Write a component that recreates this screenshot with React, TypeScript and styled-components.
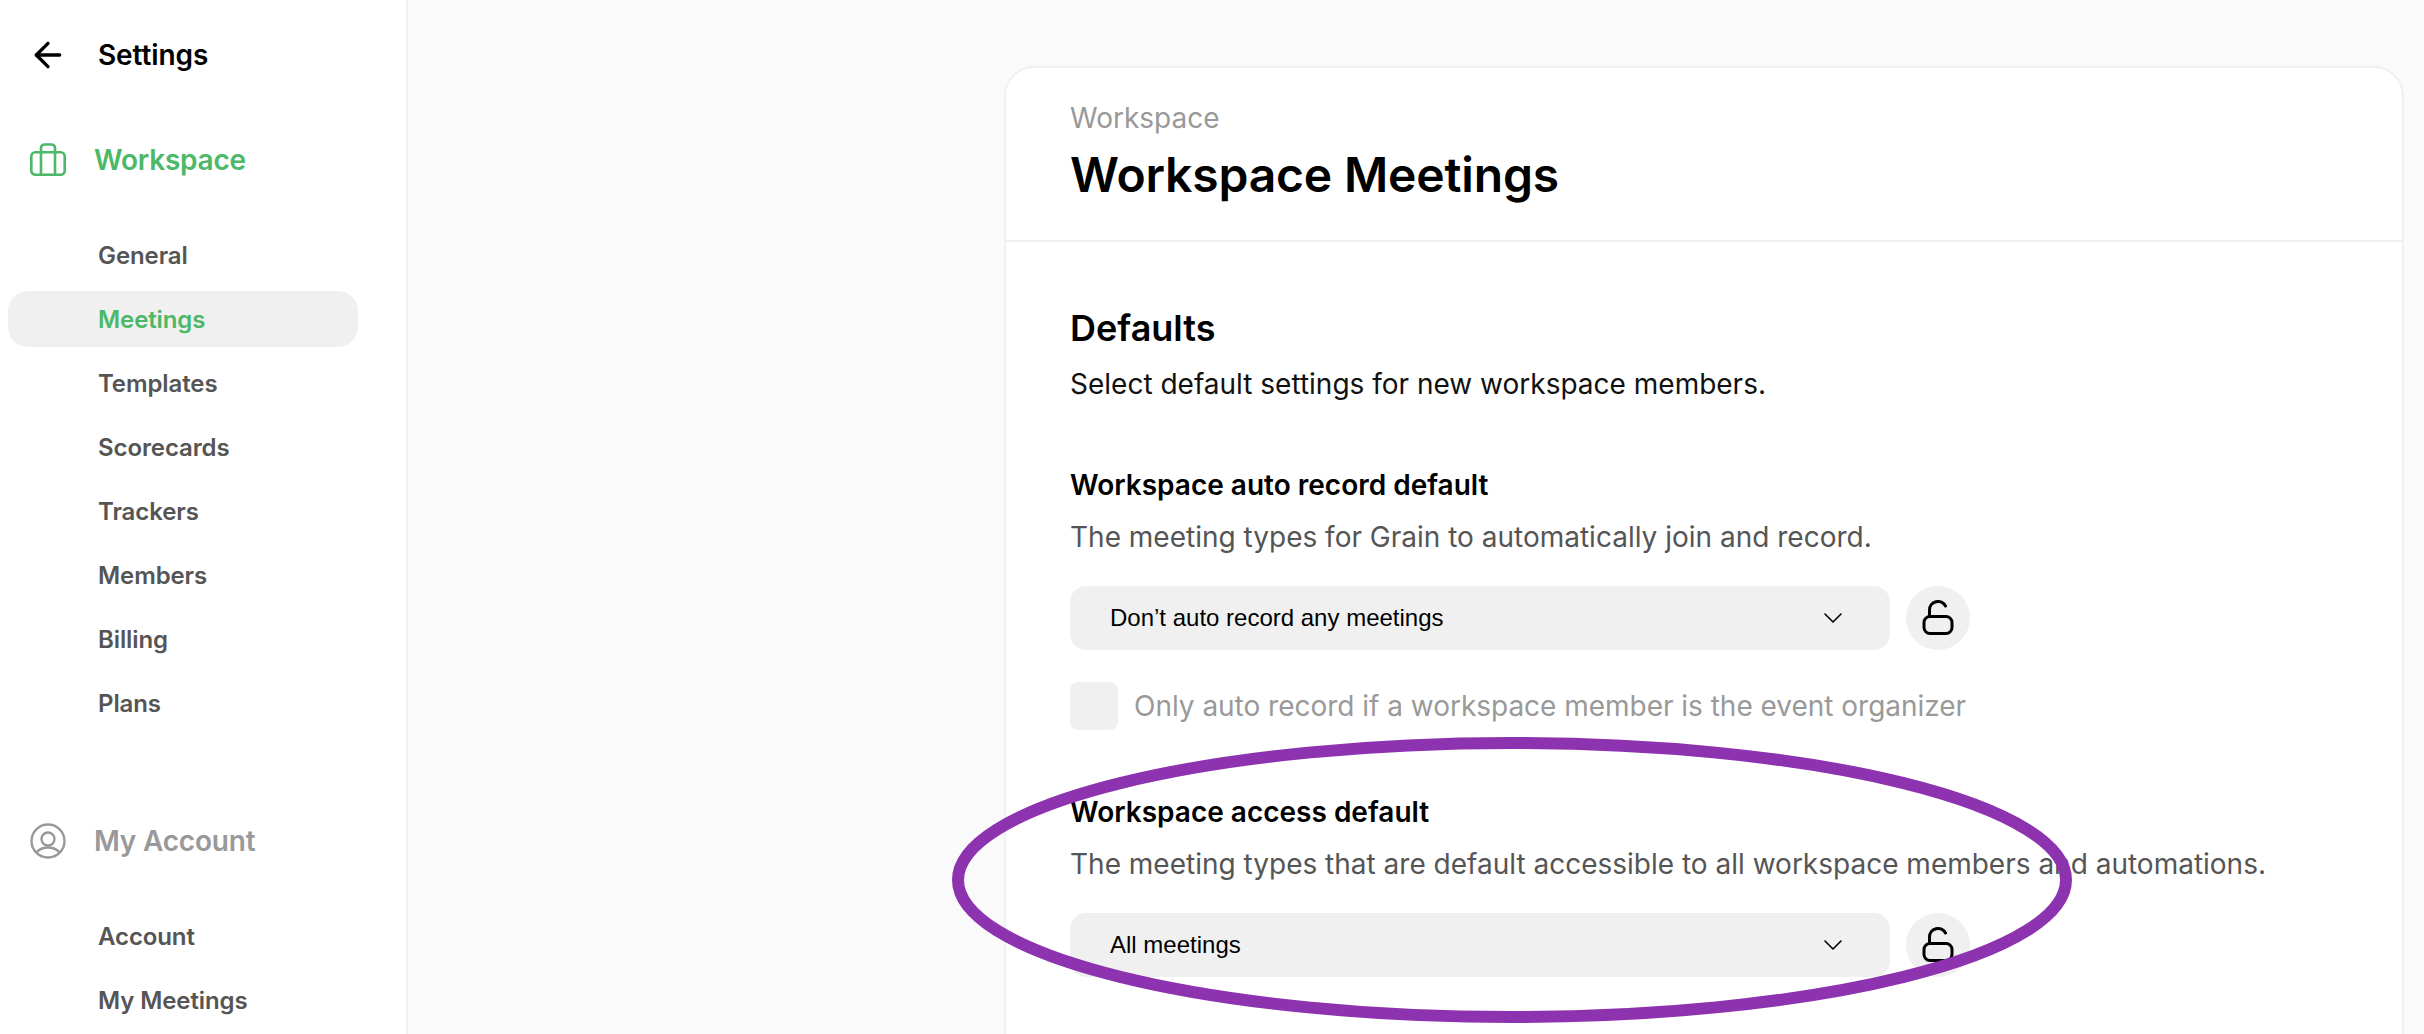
import { ArrowLeft, ChevronDown } from 'lucide-react'
import styled, { createGlobalStyle } from 'styled-components'

const GlobalStyle = createGlobalStyle`
  html, body {
    margin: 0;
    padding: 0;
    height: 1034px;
    overflow: hidden;
    background: #fafafa;
    font-family: Inter, "Liberation Sans", sans-serif;
  }
`

const Page = styled.div`
  position: relative;
  display: flex;
  width: 2424px;
  height: 1034px;
  overflow: hidden;
`

const Sidebar = styled.aside`
  flex: none;
  box-sizing: border-box;
  width: 408px;
  height: 100%;
  background: #fff;
  border-right: 2px solid #f0f0f0;
  padding: 0 48px 0 8px;
`

const TopBar = styled.div`
  display: flex;
  align-items: center;
  gap: 30px;
  height: 110px;
  margin-bottom: 20px;
  padding-left: 20px;
  font-size: 28px;
  font-weight: 600;
  letter-spacing: -0.1px;
  color: #000;
`

const GroupTitle = styled.div<{ $muted?: boolean }>`
  display: flex;
  align-items: center;
  gap: 27px;
  height: 60px;
  padding-left: 21px;
  font-size: 28px;
  font-weight: 600;
  letter-spacing: -0.2px;
  color: ${p => (p.$muted ? '#999' : '#4cb868')};
`

const NavList = styled.nav<{ $gapBelow?: number }>`
  display: flex;
  flex-direction: column;
  gap: 8px;
  margin-top: 37px;
  margin-bottom: ${p => p.$gapBelow ?? 0}px;
`

const NavItem = styled.div<{ $active?: boolean }>`
  display: flex;
  align-items: center;
  height: 56px;
  padding-left: 90px;
  border-radius: 20px;
  font-size: 24px;
  font-weight: 600;
  letter-spacing: -0.1px;
  color: ${p => (p.$active ? '#4cb868' : '#555')};
  background: ${p => (p.$active ? '#f0f0f0' : 'transparent')};
`

const Main = styled.main`
  flex: 1;
  display: flex;
  justify-content: flex-end;
  padding: 66px 20px 0 0;
`

const Card = styled.section`
  box-sizing: border-box;
  width: 1400px;
  height: 1100px;
  background: #fff;
  border: 2px solid #f0f0f0;
  border-radius: 30px;
`

const CardHeader = styled.header`
  box-sizing: border-box;
  height: 174px;
  padding: 34px 64px 0;
  border-bottom: 2px solid #f0f0f0;
`

const Crumb = styled.div`
  font-size: 28px;
  line-height: 32px;
  color: #999;
`

const Title = styled.h1`
  margin: 11px 0 0;
  font-size: 48px;
  line-height: 60px;
  font-weight: 600;
  letter-spacing: -0.17px;
  color: #000;
`

const CardBody = styled.div`
  padding: 64px 64px 0;
`

const SectionTitle = styled.h2`
  margin: 0;
  font-size: 36px;
  line-height: 44px;
  font-weight: 600;
  color: #000;
`

const SectionLead = styled.p`
  margin: 14px 0 0;
  font-size: 28px;
  line-height: 40px;
  color: #111;
`

const Field = styled.div<{ $top: number }>`
  margin-top: ${p => p.$top}px;
`

const FieldTitle = styled.h3`
  margin: 0;
  font-size: 28px;
  line-height: 36px;
  font-weight: 600;
  color: #000;
`

const FieldHint = styled.p`
  margin: 16px 0 0;
  font-size: 28px;
  line-height: 36px;
  color: #555;
  white-space: nowrap;
`

const ControlRow = styled.div`
  display: flex;
  gap: 16px;
  margin-top: 31px;
`

const Select = styled.div`
  box-sizing: border-box;
  display: flex;
  align-items: center;
  justify-content: space-between;
  width: 820px;
  height: 64px;
  padding: 0 41px 0 40px;
  border-radius: 16px;
  background: #f0f0f0;
  font-family: "Liberation Sans", Arial, sans-serif;
  font-size: 24px;
  color: #000;
`

const LockButton = styled.div`
  display: flex;
  align-items: center;
  justify-content: center;
  width: 64px;
  height: 64px;
  border-radius: 50%;
  background: #f0f0f0;
`

const CheckRow = styled.div`
  display: flex;
  align-items: center;
  gap: 16px;
  margin-top: 32px;
  font-size: 28px;
  letter-spacing: -0.02px;
  color: #999;
`

const CheckBox = styled.div`
  width: 48px;
  height: 48px;
  border-radius: 8px;
  background: #f0f0f0;
`

const Highlight = styled.svg`
  position: absolute;
  left: 0;
  top: 0;
  pointer-events: none;
`

function CaseIcon() {
  return (
    <svg width="38" height="34" viewBox="0 0 38 34" fill="none" stroke="#4cb868" strokeWidth="2.6" strokeLinejoin="round" strokeLinecap="round">
      <rect x="2.300" y="9.300" width="33.400" height="22.400" rx="4" />
      <path d="M12 31.700V5a3.500 3.500 0 0 1 3.500-3.500h7a3.500 3.500 0 0 1 3.500 3.500v26.700" />
    </svg>
  )
}

function UserIcon() {
  return (
    <svg width="38" height="36" viewBox="0 0 38 36" fill="none" stroke="#999" strokeWidth="2.400" strokeLinecap="round">
      <circle cx="19" cy="18" r="16.500" />
      <circle cx="19" cy="16" r="6.500" />
      <path d="M7.500 29.500C10 26.500 14 24.500 19 24.500s9 2 11.500 5" />
    </svg>
  )
}

function OpenLockIcon() {
  return (
    <svg width="34" height="36" viewBox="0 0 34 36" fill="none" stroke="#000" strokeWidth="3" strokeLinecap="round">
      <rect x="3" y="16.500" width="28" height="17" rx="6" />
      <path d="M8.500 16.500V10a8.500 8.500 0 0 1 16-4" />
    </svg>
  )
}

const workspaceLinks = ['General', 'Meetings', 'Templates', 'Scorecards', 'Trackers', 'Members', 'Billing', 'Plans']
const accountLinks = ['Account', 'My Meetings']

export default function App() {
  return (
    <Page>
      <GlobalStyle />
      <Sidebar>
        <TopBar>
          <ArrowLeft size={40} strokeWidth={2} color="#000" />
          Settings
        </TopBar>
        <GroupTitle>
          <CaseIcon />
          Workspace
        </GroupTitle>
        <NavList $gapBelow={80}>
          {workspaceLinks.map(link => (
            <NavItem key={link} $active={link === 'Meetings'}>{link}</NavItem>
          ))}
        </NavList>
        <GroupTitle $muted>
          <UserIcon />
          My Account
        </GroupTitle>
        <NavList>
          {accountLinks.map(link => (
            <NavItem key={link}>{link}</NavItem>
          ))}
        </NavList>
      </Sidebar>
      <Main>
        <Card>
          <CardHeader>
            <Crumb>Workspace</Crumb>
            <Title>Workspace Meetings</Title>
          </CardHeader>
          <CardBody>
            <SectionTitle>Defaults</SectionTitle>
            <SectionLead>Select default settings for new workspace members.</SectionLead>
            <Field $top={63}>
              <FieldTitle>Workspace auto record default</FieldTitle>
              <FieldHint>The meeting types for Grain to automatically join and record.</FieldHint>
              <ControlRow>
                <Select>
                  Don’t auto record any meetings
                  <ChevronDown size={32} strokeWidth={1.200} color="#000" />
                </Select>
                <LockButton><OpenLockIcon /></LockButton>
              </ControlRow>
              <CheckRow>
                <CheckBox />
                Only auto record if a workspace member is the event organizer
              </CheckRow>
            </Field>
            <Field $top={64}>
              <FieldTitle>Workspace access default</FieldTitle>
              <FieldHint>The meeting types that are default accessible to all workspace members and automations.</FieldHint>
              <ControlRow>
                <Select>
                  All meetings
                  <ChevronDown size={32} strokeWidth={1.200} color="#000" />
                </Select>
                <LockButton><OpenLockIcon /></LockButton>
              </ControlRow>
            </Field>
          </CardBody>
        </Card>
      </Main>
      <Highlight width="2424" height="1034" viewBox="0 0 2424 1034" fill="none">
        <ellipse cx="1512" cy="880" rx="554" ry="137" stroke="#8e33b0" strokeWidth="12" />
      </Highlight>
    </Page>
  )
}
